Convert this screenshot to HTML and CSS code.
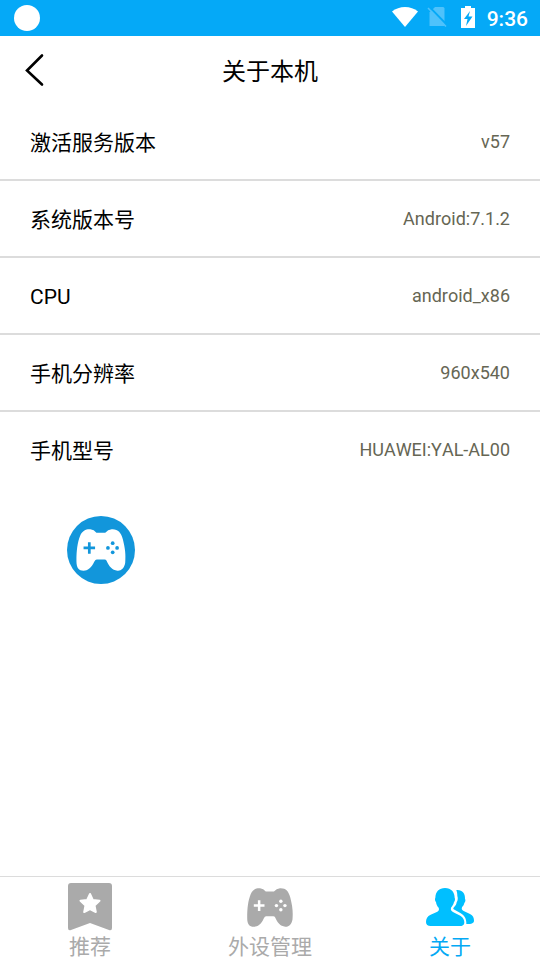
FILE: index.html
```html
<!DOCTYPE html>
<html lang="zh-CN">
<head>
<meta charset="utf-8">
<meta name="viewport" content="width=device-width, initial-scale=1">
<title>关于本机</title>
<link rel="stylesheet" href="styles.css">
</head>
<body>
<svg class="sprite" aria-hidden="true">
  <symbol id="gamepad" viewBox="81 90 145 124">
    <path fill="currentColor" d="M140 101H166Q174 92 185 91C204 90 212 100 218 120C225 148 227 165 225 190C222 208 212 214 202 213C186 212 177 200 170 184Q168 180 164 180H141Q137 180 134 186C125 206 114 213 102 213C88 213 81 205 81 185C81 153 84 130 92 110C98 95 110 90 122 91Q133 92 140 101Z"/>
    <g class="pad-detail">
      <path d="M115 129h8v13h13v8h-13v13h-8v-13h-13v-8h13z"/>
      <circle cx="188" cy="132" r="5.500"/><circle cx="188" cy="159" r="5.500"/>
      <circle cx="174" cy="146" r="5.500"/><circle cx="201" cy="146" r="5.500"/>
    </g>
  </symbol>
</svg>
<div class="screen">
  <div class="status">
    <span class="status-dot"></span>
    <div class="status-icons">
      <svg width="26" height="20" viewBox="0 0 26 20" fill="#fff"><path d="M0 4.500C7-1.500 19-1.500 26 4.500L13 20Z"/></svg>
      <svg class="no-sim" width="20" height="22" viewBox="0 0 20 22"><path fill="#4fc2fb" d="M8 1h8q1.500 0 1.500 1.500V20H2.500V6.500z"/><path d="M2 0.500l18 18.500" stroke="#05a9f7" stroke-width="2"/><path d="M1 2l18 18.500" stroke="#4fc2fb" stroke-width="1.600"/></svg>
      <svg class="battery" width="14" height="22" viewBox="0 0 14 22"><path fill="#fff" d="M4 0h6v2h4v20H0V2h4z"/><path fill="#05a9f7" d="M9 5L3 13h3.500L5 20L11.500 10.500H7.500z"/></svg>
      <span class="time">9:36</span>
    </div>
  </div>
  <header class="header">
    <button class="back" type="button" aria-label="返回"><svg width="20" height="34" viewBox="0 0 20 34"><path d="M18 2.500L3 17.500l15 14" fill="none" stroke="#000" stroke-width="2.600" stroke-linecap="round"/></svg></button>
    <h1 class="title">关于本机</h1>
  </header>
  <main class="content">
    <dl class="info">
      <div class="row"><dt>激活服务版本</dt><dd>v57</dd></div>
      <div class="row"><dt>系统版本号</dt><dd>Android:7.1.2</dd></div>
      <div class="row"><dt>CPU</dt><dd>android_x86</dd></div>
      <div class="row"><dt>手机分辨率</dt><dd>960x540</dd></div>
      <div class="row"><dt>手机型号</dt><dd>HUAWEI:YAL-AL00</dd></div>
    </dl>
  </main>
  <nav class="tabs">
    <a class="tab" href="#recommend">
      <span class="tab-icon"><svg width="44" height="48" viewBox="0 0 44 48"><path fill="currentColor" d="M3 0H41Q44 0 44 3V45Q44 48 41 47L22 40L3 47Q0 48 0 45V3Q0 0 3 0Z"/><path fill="#fff" stroke="#fff" stroke-width="2" stroke-linejoin="round" d="M22 11l2.800 6 6.700.8-5 4.600 1.300 6.600-5.800-2.800-5.800 2.800 1.300-6.600-5-4.600 6.700-.8z"/></svg></span>
      <span>推荐</span>
    </a>
    <a class="tab" href="#devices">
      <span class="tab-icon"><svg width="46" height="39"><use href="#gamepad"/></svg></span>
      <span>外设管理</span>
    </a>
    <a class="tab active" href="#about" aria-current="page">
      <span class="tab-icon"><svg width="48" height="38" viewBox="0 0 144 114" fill="currentColor"><path d="M57 0C76 0 86 13 86 29C88 32 87 39 84 42C82 51 79 54 75 59C73 67 77 70 85 74L103 83C112 88 115 96 115 104C115 111 109 114 101 114H14C5 114 0 110 0 102C0 91 4 85 14 80L34 71C39 68 40 64 38 59C33 54 31 49 30 42C27 39 26 33 28 29C29 11 39 0 57 0Z"/><path d="M91 6C108 4 118 16 117 32C120 37 117 42 115 45C114 51 111 54 108 58C106 63 108 67 113 69L132 78C141 82 144 90 144 98C144 105 138 108 121 108C122 94 116 82 103 75L83 64C81 62 82 60 84 58C90 52 91 48 92 43C96 36 96 30 94 24C94 17 93 12 91 6Z"/></svg></span>
      <span>关于</span>
    </a>
  </nav>
  <button class="ball" type="button" aria-label="手柄"><svg width="50" height="42"><use href="#gamepad"/></svg></button>
</div>
</body>
</html>
```
FILE: styles.css
```css
* {
  box-sizing: border-box;
}

body {
  margin: 0;
  background: #fff;
  color: #000;
  font-family: Roboto, "Noto Sans CJK SC", sans-serif;
}

svg {
  display: block;
}

.sprite {
  position: absolute;
  width: 0;
  height: 0;
}

.screen {
  position: relative;
  display: flex;
  flex-direction: column;
  min-height: 100vh;
}

.status {
  display: flex;
  align-items: center;
  justify-content: space-between;
  height: 36px;
  padding: 0 12px 0 14px;
  background: #05a9f7;
  color: #fff;
}

.status-dot {
  width: 26px;
  height: 26px;
  border-radius: 50%;
  background: #fff;
}

.status-icons {
  display: flex;
  align-items: center;
}

.status-icons svg {
  margin-bottom: 2px;
}

.no-sim {
  margin-left: 9px;
}

.battery {
  margin-left: 14px;
}

.time {
  margin-left: 12px;
  padding-top: 2px;
  font-size: 21px;
  line-height: 34px;
  font-weight: 500;
}

.header {
  display: grid;
  grid-template-columns: 68px 1fr 68px;
  align-items: center;
  height: 68px;
}

.back {
  display: flex;
  align-items: center;
  height: 68px;
  padding: 0 24px;
  border: 0;
  background: none;
}

.title {
  margin: 0;
  padding-top: 4px;
  font-size: 24px;
  line-height: 64px;
  font-weight: 400;
  text-align: center;
}

.content {
  flex: 1;
}

.info {
  margin: 0;
}

.row {
  display: flex;
  align-items: center;
  justify-content: space-between;
  padding: 0 30px;
  line-height: 75px;
}

.row + .row {
  border-top: 2px solid #dcdcdc;
}

.row dt {
  padding-top: 4px;
  font-size: 21px;
  line-height: 71px;
}

.row dd {
  margin: 0;
  color: #666654;
  font-size: 18px;
  font-kerning: none;
}

.tabs {
  display: grid;
  grid-template-columns: repeat(3, 1fr);
  height: 84px;
  border-top: 1px solid #dcdcdc;
}

.tab {
  display: flex;
  flex-direction: column;
  align-items: center;
  padding-top: 6px;
  color: #aaa;
  font-size: 21px;
  line-height: 32px;
  text-decoration: none;
  --detail: #fff;
}

.tab.active {
  color: #03a9f4;
}

.tab-icon {
  display: flex;
  align-items: center;
  height: 48px;
}

.active .tab-icon {
  color: #00bfff;
}

.pad-detail {
  fill: var(--detail);
}

.ball {
  position: absolute;
  top: 516px;
  left: 67px;
  display: flex;
  align-items: center;
  justify-content: center;
  width: 68px;
  height: 68px;
  padding: 0;
  border: 0;
  border-radius: 50%;
  background: #1296db;
  color: #fff;
  --detail: #1296db;
}
```
